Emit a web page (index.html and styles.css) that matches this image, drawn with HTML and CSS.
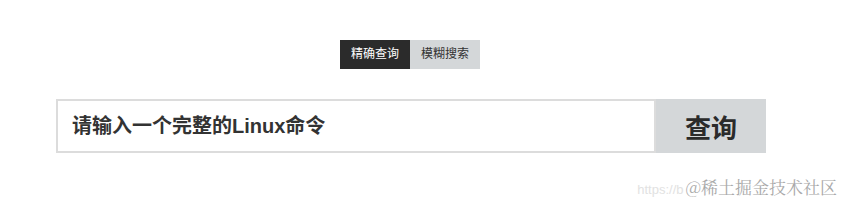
FILE: index.html
```html
<!DOCTYPE html>
<html lang="zh-CN">
<head>
    <meta charset="UTF-8">
    <title>Linux命令查询</title>
    <link rel="stylesheet" href="styles.css">
</head>
<body>
    <div class="page">
        <!-- 查询方式切换 -->
        <div class="tabs">
            <span class="tab active">精确查询</span>
            <span class="tab">模糊搜索</span>
        </div>

        <!-- 搜索框 -->
        <div class="search">
            <input class="search-input" type="text" placeholder="请输入一个完整的Linux命令">
            <button class="search-btn">查询</button>
        </div>
    </div>

    <div class="watermark"><span class="url">https://b</span><span class="site">@稀土掘金技术社区</span></div>
</body>
</html>
```

FILE: styles.css
```css
* {
    margin: 0;
    padding: 0;
    box-sizing: border-box;
}

body {
    background: #fff;
    font-family: "Liberation Sans", "Noto Sans CJK SC", sans-serif;
    width: 845px;
    height: 205px;
    overflow: hidden;
    position: relative;
}

.page {
    padding-top: 40px;
}

.tabs {
    display: flex;
    margin-left: 340px;
}

.tab {
    width: 70px;
    height: 29px;
    line-height: 29px;
    text-align: center;
    font-size: 12px;
    color: #333;
    background: #d4d7d9;
}

.tab.active {
    background: #2b2b2b;
    color: #fff;
}

.search {
    display: flex;
    margin-top: 30px;
    margin-left: 56px;
    height: 54px;
}

.search-input {
    width: 600px;
    height: 54px;
    border: 2px solid #dcdcdc;
    padding-left: 14px;
    font-size: 20px;
    font-weight: bold;
    font-family: "Liberation Sans", "Noto Sans CJK SC", sans-serif;
    outline: none;
}

.search-input::placeholder {
    color: #333;
    opacity: 1;
}

.search-btn {
    width: 110px;
    height: 54px;
    border: none;
    background: #d4d7d9;
    color: #2b2b2b;
    font-size: 26px;
    font-weight: bold;
    font-family: "Liberation Sans", "Noto Sans CJK SC", sans-serif;
}

.watermark {
    position: absolute;
    right: 8px;
    bottom: 6px;
    display: flex;
    align-items: baseline;
}

.watermark .url {
    font-size: 13px;
    color: #e2e2e2;
    margin-right: 2px;
}

.watermark .site {
    font-size: 17px;
    color: #a9a9a9;
    font-family: "Noto Serif CJK SC", "Noto Sans CJK SC", serif;
}
```
